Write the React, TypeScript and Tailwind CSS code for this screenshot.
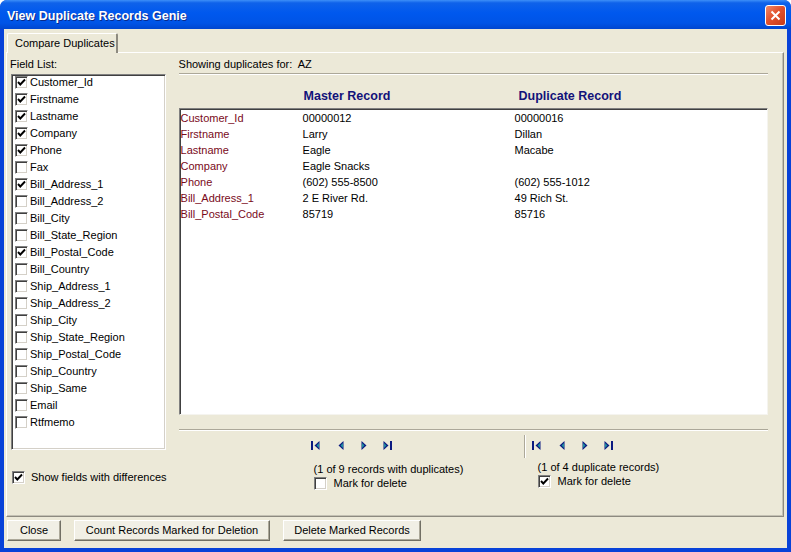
import React from "react";

const fields: [string, boolean][] = [
  ["Customer_Id", true],
  ["Firstname", true],
  ["Lastname", true],
  ["Company", true],
  ["Phone", true],
  ["Fax", false],
  ["Bill_Address_1", true],
  ["Bill_Address_2", false],
  ["Bill_City", false],
  ["Bill_State_Region", false],
  ["Bill_Postal_Code", true],
  ["Bill_Country", false],
  ["Ship_Address_1", false],
  ["Ship_Address_2", false],
  ["Ship_City", false],
  ["Ship_State_Region", false],
  ["Ship_Postal_Code", false],
  ["Ship_Country", false],
  ["Ship_Same", false],
  ["Email", false],
  ["Rtfmemo", false],
];

const rows: [string, string, string][] = [
  ["Customer_Id", "00000012", "00000016"],
  ["Firstname", "Larry", "Dillan"],
  ["Lastname", "Eagle", "Macabe"],
  ["Company", "Eagle Snacks", ""],
  ["Phone", "(602) 555-8500", "(602) 555-1012"],
  ["Bill_Address_1", "2 E River Rd.", "49 Rich St."],
  ["Bill_Postal_Code", "85719", "85716"],
];

function Check({ checked }: { checked?: boolean }) {
  return (
    <span className="w-[13px] h-[13px] shrink-0 bg-white border border-t-[#808080] border-l-[#808080] border-b-white border-r-white shadow-[inset_1px_1px_0_#404040,inset_-1px_-1px_0_#d4d0c8] flex items-center justify-center">
      {checked && (
        <svg width="11" height="11" viewBox="0 0 11 11">
          <polyline points="2,5 4.3,7.5 9,2.5" fill="none" stroke="#000" strokeWidth="1.9" />
        </svg>
      )}
    </span>
  );
}

function NavIcon({ kind }: { kind: "first" | "prev" | "next" | "last" }) {
  const navy = "#0b1a80";
  const teal = "#1f8fa0";
  if (kind === "first")
    return (
      <svg width="9" height="9" viewBox="0 0 9 9">
        <rect x="0" y="0" width="2" height="9" fill={navy} />
        <polygon points="8.5,0 3.5,4.5 8.5,9" fill={navy} />
        <polygon points="8,2 5.5,4.5 8,7" fill={teal} />
      </svg>
    );
  if (kind === "prev")
    return (
      <svg width="6" height="9" viewBox="0 0 6 9">
        <polygon points="5.5,0 0.5,4.5 5.5,9" fill={navy} />
        <polygon points="5,2 2.5,4.5 5,7" fill={teal} />
      </svg>
    );
  if (kind === "next")
    return (
      <svg width="6" height="9" viewBox="0 0 6 9">
        <polygon points="0.5,0 5.5,4.5 0.5,9" fill={navy} />
        <polygon points="1,2 3.5,4.5 1,7" fill={teal} />
      </svg>
    );
  return (
    <svg width="9" height="9" viewBox="0 0 9 9">
      <polygon points="0.5,0 5.5,4.5 0.5,9" fill={navy} />
      <polygon points="1,2 3.5,4.5 1,7" fill={teal} />
      <rect x="7" y="0" width="2" height="9" fill={navy} />
    </svg>
  );
}

function NavGroup() {
  return (
    <div className="flex items-start h-[9px]">
      <NavIcon kind="first" />
      <span className="ml-[18px]">
        <NavIcon kind="prev" />
      </span>
      <span className="ml-[17px]">
        <NavIcon kind="next" />
      </span>
      <span className="ml-[16px]">
        <NavIcon kind="last" />
      </span>
    </div>
  );
}

function Button({ label, width }: { label: string; width: string }) {
  return (
    <button
      className={`${width} h-[21px] bg-[#f1efe5] border border-t-white border-l-white border-b-[#716f64] border-r-[#716f64] shadow-[inset_-1px_-1px_0_#aca899] text-[11px] leading-[13px] text-black flex items-center justify-center`}
    >
      {label}
    </button>
  );
}

export default function App() {
  return (
    <div
      className="w-[791px] h-[552px] flex flex-col bg-[#0842d8] rounded-t-[7px] overflow-hidden text-black"
      style={{ fontFamily: '"Liberation Sans", Arial, sans-serif' }}
    >
      {/* title bar */}
      <div className="h-[29px] shrink-0 flex items-center justify-between pl-[7px] pr-[5px] bg-[linear-gradient(to_bottom,#3d8ff8_0%,#0f62ea_10%,#0058ee_45%,#0054e6_80%,#0046cf_100%)]">
        <span className="pt-[3px] text-white font-bold text-[12.5px] [text-shadow:1px_1px_0_#0a2a8a]">
          View Duplicate Records Genie
        </span>
        <span className="mt-[1px] w-[21px] h-[21px] rounded-[3px] border border-white bg-[linear-gradient(135deg,#f08a6a_0%,#e2522e_45%,#c53a18_100%)] flex items-center justify-center">
          <svg width="11" height="11" viewBox="0 0 11 11">
            <path d="M1.5 1.5 L9.5 9.5 M9.5 1.5 L1.5 9.5" stroke="#fff" strokeWidth="2" />
          </svg>
        </span>
      </div>

      {/* body */}
      <div className="flex-1 mx-[4px] mb-[4px] bg-[#ece9d8] flex flex-col pt-[4px] text-[11px] leading-[13px]">
        {/* tab */}
        <div className="flex pl-[3px]">
          <div className="h-[20px] w-[111px] border-t border-l border-t-white border-l-white border-r-2 border-r-[#8d8a80] rounded-t-[2px] flex items-center pl-[7px] -mb-px relative z-10 bg-[#ece9d8]">
            Compare Duplicates
          </div>
        </div>

        {/* panel */}
        <div className="h-[465px] ml-[2px] mr-[3px] border border-t-white border-l-white border-b-[#8d8a80] border-r-[#8d8a80] shadow-[inset_-1px_-1px_0_#c4c1b4] flex">
          {/* left column */}
          <div className="pl-[3px] pt-[5px] flex flex-col">
            <div>Field List:</div>
            <div className="ml-[1px] mt-[3px] w-[155px] h-[376px] bg-white border border-t-[#808080] border-l-[#808080] border-b-white border-r-white shadow-[inset_1px_1px_0_#404040,inset_-1px_-1px_0_#d4d0c8] pt-[1px] pl-[3px]">
              {fields.map(([name, checked]) => (
                <div key={name} className="h-[17px] flex items-start gap-[2px]">
                  <Check checked={checked} />
                  <span className="leading-[13px]">{name}</span>
                </div>
              ))}
            </div>
            <div className="ml-[2px] mt-[21px] flex items-center gap-[6px]">
              <Check checked />
              <span>Show fields with differences</span>
            </div>
          </div>

          {/* right column */}
          <div className="ml-[12px] w-[589px] pt-[5px] flex flex-col">
            <div>Showing duplicates for:&nbsp; AZ</div>
            <div className="mt-[2px] h-[2px] border-t border-t-[#aca899] border-b border-b-white" />
            <div className="mt-[13px] flex font-bold text-[12.5px] leading-[16px] text-[#12127a]">
              <span className="ml-[125px] w-[215px]">Master Record</span>
              <span>Duplicate Record</span>
            </div>
            <div className="mt-[4px] h-[307px] pt-[1px] bg-white border border-t-[#808080] border-l-[#808080] border-b-[#f5f4ef] border-r-[#f5f4ef] shadow-[inset_1px_1px_0_#404040]">
              {rows.map(([label, a, b]) => (
                <div key={label} className="h-[16px] flex items-center pl-[1px]">
                  <span className="w-[122px] text-[#7a0a1a]">{label}</span>
                  <span className="w-[212px]">{a}</span>
                  <span>{b}</span>
                </div>
              ))}
            </div>
            <div className="mt-[14px] h-[2px] border-t border-t-[#aca899] border-b border-b-white" />

            {/* navigation */}
            <div className="flex">
              <div className="w-[345px] pl-[132px] pt-[10px] flex flex-col">
                <NavGroup />
                <div className="mt-[13px] ml-[3px]">(1 of 9 records with duplicates)</div>
                <div className="mt-[1px] ml-[3px] flex items-center gap-[7px]">
                  <Check />
                  <span>Mark for delete</span>
                </div>
              </div>
              <div className="mt-[4px] h-[23px] w-[2px] border-l border-l-[#aca899] border-r border-r-white" />
              <div className="pl-[6px] pt-[10px] flex flex-col">
                <NavGroup />
                <div className="mt-[11px] ml-[6px]">(1 of 4 duplicate records)</div>
                <div className="mt-[1px] ml-[6px] flex items-center gap-[7px]">
                  <Check checked />
                  <span>Mark for delete</span>
                </div>
              </div>
            </div>
          </div>
        </div>

        {/* bottom buttons */}
        <div className="mt-[3px] pl-[3px] flex gap-[13px]">
          <Button label="Close" width="w-[54px]" />
          <Button label="Count Records Marked for Deletion" width="w-[196px]" />
          <Button label="Delete Marked Records" width="w-[138px]" />
        </div>
      </div>
    </div>
  );
}
